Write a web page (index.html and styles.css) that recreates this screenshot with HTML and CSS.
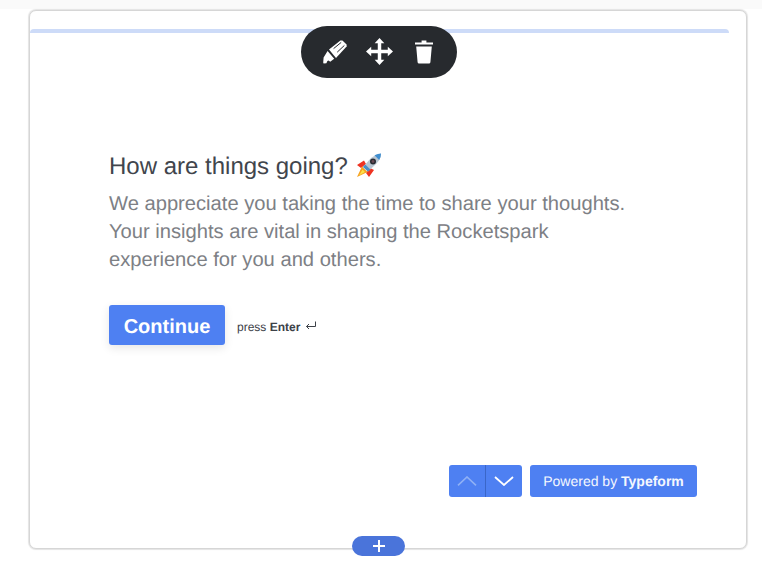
FILE: index.html
```html
<!DOCTYPE html>
<html lang="en">
<head>
<meta charset="utf-8">
<title>Typeform block</title>
<link rel="stylesheet" href="styles.css">
</head>
<body>
<main class="card">
  <div class="progress"></div>
  <div class="toolbar">
    <svg class="tool" width="24" height="24" viewBox="0 0 24 24"><path fill="#fff" d="M6 9.4 L17.4 0.4 L19.4 0.4 L23.6 4.4 L23.6 6.6 L13 18 Z"/><path fill="#fff" d="M4.6 11 L11.2 18.8 L7.2 21.8 L5.6 20.6 L4.4 21 L3.4 23.2 L0.6 23.6 L0.2 22.6 L0.6 17.4 Z"/><path fill="none" stroke="#272a2e" stroke-width="1" d="M10.6 8.6 L18.2 2.4 M14.2 12.2 L21.4 5.4"/></svg>
    <svg class="tool move" width="27" height="27" viewBox="0 0 28 28"><path fill="#fff" d="M14 0 L19 5.4 H15.8 V12.2 H22.6 V9 L28 14 L22.6 19 V15.8 H15.8 V22.6 H19 L14 28 L9 22.6 H12.2 V15.8 H5.4 V19 L0 14 L5.4 9 V12.2 H12.2 V5.4 H9 Z"/></svg>
    <svg class="tool trash" width="20" height="24" viewBox="0 0 20 24"><path fill="#fff" d="M7.6 0.6 H12.4 V2.6 H19 V4.4 H1 V2.6 H7.6 Z M2.2 6.4 H17.8 L16.4 22.2 Q16.2 23.4 15 23.4 H5 Q3.8 23.4 3.6 22.2 Z"/></svg>
  </div>
  <section class="content">
    <h1 class="title">How are things going? <svg class="rocket" width="26" height="25" viewBox="0 0 26 25"><path fill="#ee3322" d="M1 12 L8 7.5 L10 11 L5 15 Z M13 24 L18 17 L14 15 L10 20 Z"/><path fill="#f6a01e" d="M1 24 L6 13.5 L11.5 19 Z"/><path fill="#fbe14a" d="M3 22.5 L6.5 16.5 L9 19 Z"/><path fill="#b9c6d2" d="M7 14 L15 5 Q19.5 1.2 25 0.5 Q25 6 20.5 10.5 L12 18.5 Z"/><path fill="#3f8ed0" d="M18.5 2.2 Q22 0.8 25 0.5 Q25 4 23.2 7 Z"/><path fill="#4a8fc7" d="M7 14 L9.2 11.6 L14.4 16.4 L12 18.5 Z"/><circle cx="17" cy="8.5" r="3" fill="#2a2c33"/><circle cx="17" cy="8.5" r="1.4" fill="#6a4a55"/></svg></h1>
    <p class="desc">We appreciate you taking the time to share your thoughts.<br>Your insights are vital in shaping the Rocketspark<br>experience for you and others.</p>
    <div class="actions">
      <button class="continue" type="button">Continue</button>
      <span class="hint">press <b>Enter</b> <svg class="enter" width="12" height="10" viewBox="0 0 12 10"><path fill="none" stroke="#3d4148" stroke-width="1" d="M10.5 0.5 V5.5 H1.5 M4 3 L1.5 5.5 L4 8"/></svg></span>
    </div>
  </section>
  <footer class="footer">
    <div class="nav">
      <span class="nav-btn up"><svg width="20" height="10" viewBox="0 0 20 10"><path fill="none" stroke="#8fb0f5" stroke-width="1.6" d="M1 9.4 L10 1 L19 9.4"/></svg></span>
      <span class="nav-btn down"><svg width="20" height="10" viewBox="0 0 20 10"><path fill="none" stroke="#fff" stroke-width="1.8" d="M1 1 L10 9 L19 1"/></svg></span>
    </div>
    <div class="powered">Powered by <b>Typeform</b></div>
  </footer>
  <div class="add"><svg width="12" height="12" viewBox="0 0 12 12"><path stroke="#fff" stroke-width="2" d="M6 0 V12 M0 6 H12"/></svg></div>
</main>
</body>
</html>
```
FILE: styles.css
```css
* { box-sizing: border-box; }
html, body { margin: 0; height: 100%; }
body {
  background: linear-gradient(#fafafa 9px, #fff 9px);
  padding: 10px 0 0 29px;
  font-family: "Liberation Sans", Arial, sans-serif;
  text-rendering: geometricPrecision;
  overflow: hidden;
}
.card {
  position: relative;
  width: 718px;
  height: 539px;
  border: 1px solid #d6d6d6;
  border-radius: 7px;
  background: #fff;
  box-shadow: 0 0 1px 1px #e4e4e4;
  padding-top: 18px;
  display: flex;
  flex-direction: column;
}
.progress {
  height: 4px;
  width: 699px;
  background: #cddbf8;
  border-radius: 6px 6px 0 0;
  flex: none;
}
.toolbar {
  position: absolute;
  top: 15px;
  left: 271px;
  width: 156px;
  height: 52px;
  border-radius: 26px;
  background: #272a2e;
  display: flex;
  align-items: center;
  gap: 19px;
  padding: 0 0 1px 22px;
}
.tool { display: block; }
.trash { margin-left: 2px; }
.content { padding: 120px 0 0 79px; flex: 1; }
.title {
  margin: 0;
  font-size: 24px;
  line-height: 28px;
  font-weight: 400;
  color: #41454c;
  display: flex;
  align-items: center;
  gap: 8px;
}
.rocket { display: block; margin-top: -4px; }
.desc {
  margin: 9px 0 0;
  font-size: 20.16px;
  line-height: 28px;
  color: #7d8085;
}
.actions {
  margin-top: 31px;
  display: flex;
  align-items: center;
  gap: 12px;
}
.continue {
  width: 116px;
  height: 40px;
  border: 0;
  border-radius: 3px;
  background: #4e80f2;
  color: #fff;
  font: 700 20px "Liberation Sans", Arial, sans-serif;
  text-rendering: geometricPrecision;
  padding: 4px 0 0;
  box-shadow: 0 3px 10px rgba(0, 0, 0, 0.1);
}
.hint { font-size: 12px; color: #3d4148; padding-top: 4px; }
.enter { margin-left: 1px; }
.footer {
  flex: none;
  display: flex;
  justify-content: flex-end;
  gap: 8px;
  padding: 0 49px 51px 0;
}
.nav { display: flex; height: 32px; border-radius: 3px; overflow: hidden; }
.nav-btn {
  background: #4e80f2;
  display: flex;
  align-items: center;
  justify-content: center;
}
.up { width: 37px; border-right: 1px solid #3a66c8; }
.down { width: 36px; }
.powered {
  width: 167px;
  height: 32px;
  border-radius: 3px;
  background: #4e80f2;
  color: #f4f7fe;
  font-size: 14px;
  line-height: 32px;
  text-align: center;
}
.add {
  position: absolute;
  left: 322px;
  bottom: -8px;
  width: 53px;
  height: 20px;
  border-radius: 10px;
  background: #4a74da;
  display: flex;
  align-items: center;
  justify-content: center;
}
```
